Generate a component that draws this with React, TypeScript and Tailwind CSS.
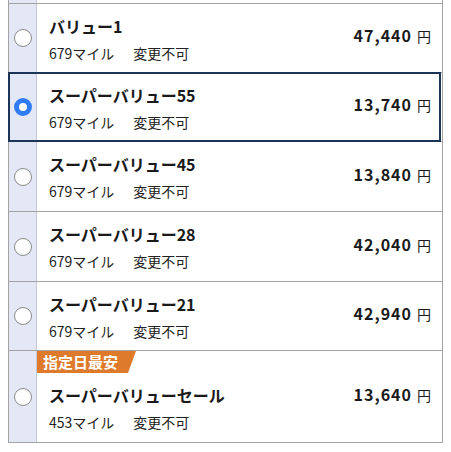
import React from "react";

type Row = { name: string; miles: string; price: string; selected?: boolean; badge?: string; tall?: boolean };

const rows: Row[] = [
  { name: "バリュー1", miles: "679", price: "47,440" },
  { name: "スーパーバリュー55", miles: "679", price: "13,740", selected: true },
  { name: "スーパーバリュー45", miles: "679", price: "13,840", tall: true },
  { name: "スーパーバリュー28", miles: "679", price: "42,040", tall: true },
  { name: "スーパーバリュー21", miles: "679", price: "42,940" },
  { name: "スーパーバリューセール", miles: "453", price: "13,640", badge: "指定日最安", tall: true },
];

function Radio({ checked }: { checked?: boolean }) {
  if (checked) {
    return <div className="w-[18px] h-[18px] rounded-full border-[5px] border-[#2f7cf6] bg-white" />;
  }
  return <div className="w-[18px] h-[18px] rounded-full border-[1.5px] border-[#8a8a8a] bg-white" />;
}

export default function App() {
  return (
    <div
      className="w-[451px] h-[452px] bg-white overflow-hidden text-[#1a1a1a]"
      style={{ fontFamily: '"Noto Sans CJK JP", "Noto Sans", sans-serif' }}
    >
      <div className="ml-[8px] w-[435px] border-l border-r border-[#a3a3a3]">
        <div className="flex h-[4px] border-b border-[#a3a3a3]">
          <div className="w-[28px] bg-[#e3e7f6] border-r border-[#c4c8d6]" />
          <div className="flex-1 bg-white" />
        </div>
        {rows.map((r, i) => (
          <div key={i} className="relative flex border-b border-[#a3a3a3]">
            <div className="w-[28px] shrink-0 bg-[#e3e7f6] border-r border-[#c4c8d6] flex items-center justify-center">
              <Radio checked={r.selected} />
            </div>
            <div className="flex-1 flex bg-white">
              <div className="flex-1 flex flex-col">
                {r.badge && (
                  <div className="h-[22px] flex">
                    <div className="h-[22px] w-[99px] bg-[#dd7a2c] text-white font-bold text-[15px] leading-[22px] pl-[6px] [clip-path:polygon(0_0,100%_0,calc(100%-8px)_100%,0_100%)]">
                      {r.badge}
                    </div>
                  </div>
                )}
                <div className={r.tall ? "pl-[12px] pt-[10px] pb-[8px]" : "pl-[12px] pt-[10px] pb-[7px]"}>
                  <div className="text-[16px] font-bold leading-[24px]">{r.name}</div>
                  <div className="text-[14px] leading-[24px] mt-[3px] flex text-[#222]">
                    <span>{r.miles}マイル</span>
                    <span className="ml-[19px]">変更不可</span>
                  </div>
                </div>
              </div>
              <div className="flex items-center pr-[11px] pb-[6px]">
                <div className="flex items-baseline">
                  <span className="text-[16px] font-bold tracking-[1px]">{r.price}</span>
                  <span className="text-[14px] ml-[5px]">円</span>
                </div>
              </div>
            </div>
            {r.selected && (
              <div className="absolute left-[-1px] right-[1px] top-[-1px] bottom-[-1px] border-[2.5px] border-[#1c3557] pointer-events-none" />
            )}
          </div>
        ))}
      </div>
    </div>
  );
}
